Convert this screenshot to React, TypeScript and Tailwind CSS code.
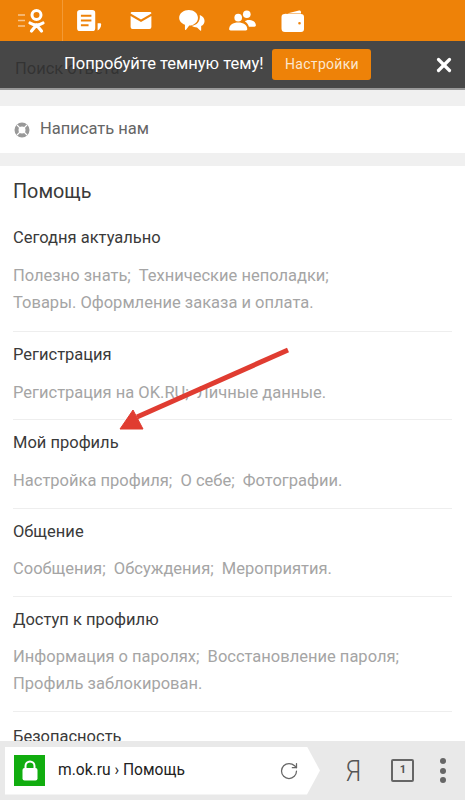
import React from 'react';
import { RotateCw, X } from 'lucide-react';

const sections = [
  { title: 'Сегодня актуально', lines: ['Полезно знать;  Технические неполадки;', 'Товары. Оформление заказа и оплата.'] },
  { title: 'Регистрация', lines: ['Регистрация на OK.RU;  Личные данные.'] },
  { title: 'Мой профиль', lines: ['Настройка профиля;  О себе;  Фотографии.'] },
  { title: 'Общение', lines: ['Сообщения;  Обсуждения;  Мероприятия.'] },
  { title: 'Доступ к профилю', lines: ['Информация о паролях;  Восстановление пароля;', 'Профиль заблокирован.'] },
];

const OkLogo = () => (
  <svg width="30" height="26" viewBox="0 0 30 26" fill="none">
    <path d="M1 7h7M1 12.500h7M1 18h7" stroke="#fff" strokeOpacity=".55" strokeWidth="1.300" />
    <circle cx="19.500" cy="7" r="4.500" stroke="#fff" strokeWidth="3" />
    <path d="M13 15c4 2.600 9 2.600 13 0M19.500 17l-5 6M19.500 17l5 6" stroke="#fff" strokeWidth="3.200" strokeLinecap="round" />
  </svg>
);

const FeedIcon = () => (
  <svg width="25" height="21" viewBox="0 0 26 22">
    <path fillRule="evenodd" fill="#fff" d="M3 0h13a3 3 0 0 1 3 3v16a3 3 0 0 1-3 3H3a3 3 0 0 1-3-3V3a3 3 0 0 1 3-3zM4 5v2h11V5zM4 10v2h11v-2zM4 15v2h8v-2z" />
    <path fill="#fff" d="M21.500 14h2.300c1 0 1.400.5 1.400 1.300 0 2.700-1.500 5.200-3.700 6.200z" />
  </svg>
);

const MailIcon = () => (
  <svg width="22" height="17" viewBox="0 0 22 18" fill="#fff">
    <path d="M1.500 0h19A1.500 1.500 0 0 1 22 1.500L11 8 0 1.500A1.500 1.500 0 0 1 1.500 0z" />
    <path d="M0 4.200 11 10.700 22 4.200V16a2 2 0 0 1-2 2H2a2 2 0 0 1-2-2z" />
  </svg>
);

const ChatIcon = () => (
  <svg width="28" height="22" viewBox="0 0 28 24" fill="#fff">
    <path d="M10.500 0C16 0 20.500 3.500 20.500 8.500S16 17 11 17l-3.500 4.500c-.5.600-1.200.3-1.200-.4V16C2.500 14.800 0 12 0 8.500 0 3.500 5 0 10.500 0z" />
    <path d="M22.500 5.500c3 1 5.200 3.500 5.200 6.500 0 2.500-1.400 4.400-3.700 5.500V22c0 .6-.6.8-1 .4L19.500 19c-2.300 0-4.300-.6-5.800-1.800 5.300-.4 9.600-4.500 8.800-11.700z" />
  </svg>
);

const FriendsIcon = () => (
  <svg width="27" height="21" viewBox="0 0 28 22" fill="#fff">
    <circle cx="9.500" cy="8" r="4" />
    <path d="M0 20c0-4.500 4-7 9.500-7s9.500 2.500 9.500 7c0 1-.6 1.500-1.500 1.500h-16C.6 21.500 0 21 0 20z" />
    <circle cx="18.500" cy="4.500" r="4" />
    <path d="M20 10.500c4.500 0 8 2 8 5.500 0 1-.6 1.500-1.500 1.500h-5.800c-.6-2.800-2.500-4.500-4.200-5.500 1-.9 2.500-1.500 3.500-1.500z" />
  </svg>
);

const WalletIcon = () => (
  <svg width="24" height="22" viewBox="0 0 24 22">
    <path fill="#fff" d="M2 4.500 18 .5c1-.2 2 .4 2 1.500v1.500H5z" />
    <path fill="#fff" fillRule="evenodd" d="M3.500 4H20a3 3 0 0 1 3 3v12a3 3 0 0 1-3 3H4a3.500 3.500 0 0 1-3.500-3.500V7A3 3 0 0 1 3.500 4zM18.500 12a1.300 1.300 0 1 0 0 2.600 1.300 1.300 0 0 0 0-2.600z" />
  </svg>
);

const LifeBuoy = () => (
  <svg width="16" height="16" viewBox="0 0 16 16" fill="none">
    <circle cx="8" cy="8" r="5.500" stroke="#999" strokeWidth="4" />
    <path d="M3 3l3 3M13 3l-3 3M3 13l3-3M13 13l-3-3" stroke="#fff" strokeWidth="1.100" />
  </svg>
);

const LockIcon = () => (
  <svg width="16" height="21" viewBox="0 0 16 21" fill="none">
    <path d="M3.500 9V6a4.500 4.500 0 0 1 9 0v3" stroke="#fff" strokeWidth="2" />
    <rect x="0.500" y="8" width="15" height="12.500" rx="2" fill="#fff" />
  </svg>
);

export default function App() {
  return (
    <div className="relative h-[800px] w-[465px] overflow-hidden bg-[#f0f0f0] font-['Roboto',sans-serif]">
      {/* Top bar */}
      <header className="flex h-[41px] items-center bg-[#ee8208]">
        <div className="flex h-full w-[63px] items-center justify-center border-r border-[#f39a35] pl-[2px]">
          <OkLogo />
        </div>
        <div className="ml-[14px] flex items-center">
          <div className="flex w-[53px] justify-start"><FeedIcon /></div>
          <div className="flex w-[48px] justify-start"><MailIcon /></div>
          <div className="flex w-[51px] justify-start"><ChatIcon /></div>
          <div className="flex w-[52px] justify-start"><FriendsIcon /></div>
          <WalletIcon />
        </div>
      </header>

      {/* Search row, mostly under the theme banner */}
      <div className="flex h-[48px] items-center bg-white px-[15px] pt-[8px] text-[16.500px] text-[#333]">Поиск ответа</div>

      <div className="mt-[17px] flex h-[47px] items-center gap-[10px] bg-white pl-[14px] text-[16.500px] text-[#666]">
        <LifeBuoy />
        <span>Написать нам</span>
      </div>

      <main className="mt-[13px] bg-white pb-[40px]">
        <h1 className="flex h-[52px] items-center px-[13px] text-[19.800px] text-[#3a3a3a]">Помощь</h1>
        <div className="mt-[-2px]">
          {sections.map((s, i) => (
            <section key={s.title} className={`mx-[13px] ${i > 0 ? 'border-t border-[#eeeeee] pt-[12px] pb-[13.800px]' : 'pt-[11px] pb-[15.500px]'}`}>
              <h2 className="text-[16.500px] leading-[22px] text-[#3a3a3a]">{s.title}</h2>
              <div className="mt-[12.500px] text-[16.500px] leading-[27px] text-[#a5a5a5]">
                {s.lines.map((l) => (
                  <p key={l} className="whitespace-pre">{l}</p>
                ))}
              </div>
            </section>
          ))}
          <section className="mx-[13px] border-t border-[#eeeeee] pt-[14px]">
            <h2 className="text-[16.500px] leading-[22px] text-[#3a3a3a]">Безопасность</h2>
          </section>
        </div>
      </main>

      {/* Theme banner */}
      <div className="absolute left-0 top-[41px] flex h-[49px] w-full items-center border-b-2 border-[#999] bg-[#333]/90 pl-[64px] text-white">
        <span className="text-[16.500px]">Попробуйте темную тему!</span>
        <button className="ml-[9px] h-[31px] w-[99px] rounded-[3px] bg-[#ee8208] text-[14px] tracking-[0.3px] text-[#fbe6cf]">Настройки</button>
        <X className="absolute left-[433px] top-[13px] h-[22px] w-[22px]" strokeWidth={3.500} color="#fff" />
      </div>

      {/* Red annotation arrow */}
      <svg className="absolute left-0 top-0" width="465" height="800" viewBox="0 0 465 800" fill="none">
        <path d="M288 350 137 417" stroke="#e03c31" strokeWidth="5" />
        <path d="M120 429 133 410 143 429z" fill="#e03c31" stroke="#e03c31" strokeWidth="1" />
      </svg>

      {/* Browser bar */}
      <div className="absolute bottom-0 left-0 flex h-[59px] w-full items-center bg-[#e9e9e9]">
        <div className="ml-[5px] flex h-[48px] w-[315px] items-center bg-white [clip-path:polygon(0_0,302px_0,100%_50%,302px_100%,0_100%)]">
          <div className="ml-[9px] flex h-[31px] w-[31px] items-center justify-center bg-[#11ad0f]"><LockIcon /></div>
          <span className="ml-[13px] text-[15.600px] text-[#222]">m.ok.ru › Помощь</span>
          <RotateCw className="absolute left-[279px] h-[20px] w-[20px]" strokeWidth={1.500} color="#666" />
        </div>
        <span className="ml-[24px] inline-block scale-x-[0.85] text-[30px] font-light text-[#555]">Я</span>
        <div className="ml-[29px] flex h-[23px] w-[23px] items-center justify-center rounded-[2px] border-2 border-[#666] text-[11px] font-bold text-[#555]">1</div>
        <div className="ml-[26px] flex flex-col gap-[3.500px]">
          <span className="h-[6px] w-[6px] rounded-full bg-[#666]" />
          <span className="h-[6px] w-[6px] rounded-full bg-[#666]" />
          <span className="h-[6px] w-[6px] rounded-full bg-[#666]" />
        </div>
      </div>
    </div>
  );
}
